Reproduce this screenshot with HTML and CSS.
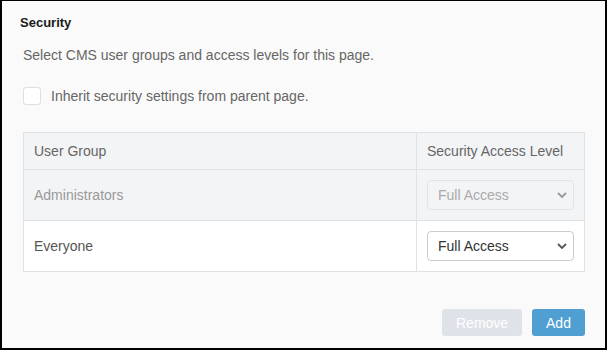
FILE: index.html
```html
<!DOCTYPE html>
<html>
<head>
<meta charset="utf-8">
<link rel="stylesheet" href="styles.css">
</head>
<body>
<div class="frame">
  <h2 class="title">Security</h2>
  <p class="desc">Select CMS user groups and access levels for this page.</p>
  <label class="inherit"><span class="check"></span><span>Inherit security settings from parent page.</span></label>
  <table class="grid">
    <thead>
      <tr><th class="c1">User Group</th><th class="c2">Security Access Level</th></tr>
    </thead>
    <tbody>
      <tr class="locked"><td class="c1">Administrators</td><td class="c2"><div class="sel disabled"><span>Full Access</span><svg viewBox="0 0 10 6" width="10" height="6"><path d="M1 1l4 4 4-4" fill="none" stroke="currentColor" stroke-width="1.8"/></svg></div></td></tr>
      <tr><td class="c1">Everyone</td><td class="c2"><div class="sel"><span>Full Access</span><svg viewBox="0 0 10 6" width="10" height="6"><path d="M1 1l4 4 4-4" fill="none" stroke="currentColor" stroke-width="1.8"/></svg></div></td></tr>
    </tbody>
  </table>
  <div class="actions">
    <button class="btn remove">Remove</button>
    <button class="btn add">Add</button>
  </div>
</div>
</body>
</html>
```
FILE: styles.css
```css
html, body { margin: 0; padding: 0; }
body { width: 608px; height: 351px; font-family: "Liberation Sans", Arial, sans-serif; background: #fff; }
.frame {
  box-sizing: border-box;
  width: 607px; height: 350px;
  border: 1px solid #000;
  border-left-width: 2px; border-right-width: 2px; border-bottom-width: 2px;
  background: #fafafa;
  padding: 14px 20px 0 21px;
}
.title { margin: 0 0 0 -3px; font-size: 13px; font-weight: bold; color: #1a1a1a; line-height: 16px; }
.desc { margin: 16px 0 0 0; font-size: 14px; color: #666; line-height: 16px; }
.inherit { display: flex; align-items: center; margin-top: 24px; font-size: 14px; color: #666; }
.check { width: 16px; height: 16px; border: 1px solid #dcdfe4; border-radius: 3px; background: #fff; margin-right: 10px; }
.grid { margin-top: 27px; width: 562px; border-collapse: collapse; font-size: 14px; }
.grid th, .grid td { border: 1px solid #dfe2e6; text-align: left; font-weight: normal; padding: 0 10px; }
.grid th { height: 36px; background: #f3f4f6; color: #666; }
.grid td { height: 50px; color: #555; background: #fff; }
.grid tr.locked td { background: #f3f4f6; color: #999; }
.grid .c1 { width: 373px; }
.sel { box-sizing: border-box; width: 147px; height: 30px; border: 1px solid #ccc; border-radius: 4px; background: #fff; display: flex; align-items: center; justify-content: space-between; padding: 0 6px 0 10px; color: #333; }
.sel svg { color: #555; }
.sel.disabled { background: #f3f4f6; border-color: #e2e4e8; color: #aaa; }
.sel.disabled svg { color: #999; }
.actions { display: flex; justify-content: flex-end; gap: 10px; margin-top: 37px; }
.btn { font-family: "Liberation Sans", Arial, sans-serif; font-size: 14px; color: #fff; border: none; border-radius: 3px; height: 27px; padding: 0 14px; }
.remove { background: #dfe2e8; width: 80px; }
.add { background: #4f9fd3; width: 53px; }
```
